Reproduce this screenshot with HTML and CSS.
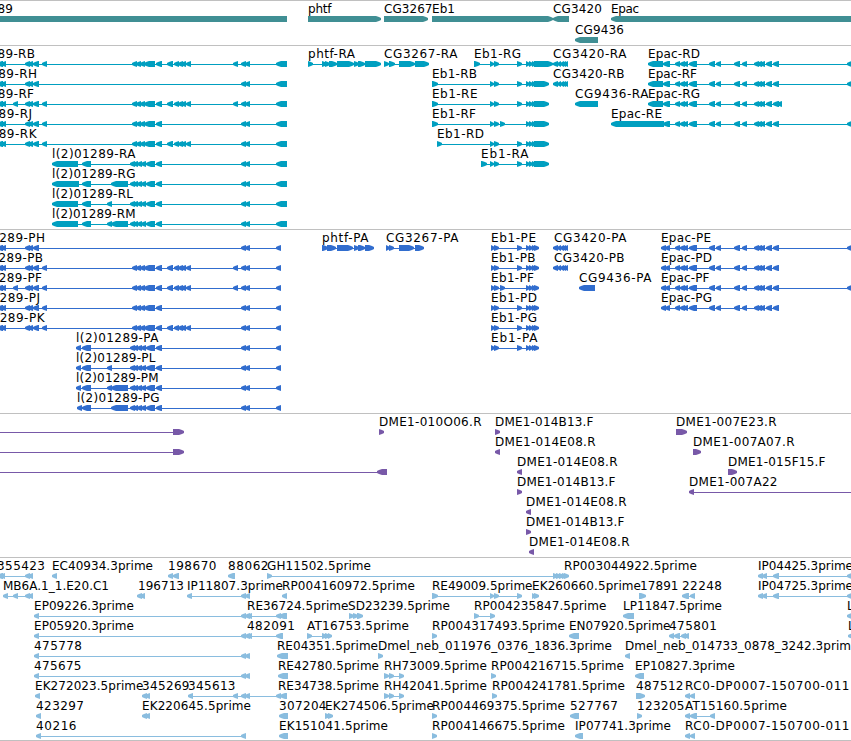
FILE: index.html
```html
<!DOCTYPE html>
<html lang="en">
<head>
  <meta charset="UTF-8" />
  <meta name="viewport" content="width=device-width, initial-scale=1.0"/>
  <title>Genome Browser</title>
  <link rel="stylesheet" href="styles.css">
</head>
<body>
  <main class="browser">
    <section class="track genes" id="genes"></section>
    <section class="track transcripts" id="transcripts"></section>
    <section class="track proteins" id="proteins"></section>
    <section class="track clones" id="clones"></section>
    <section class="track ests" id="ests"></section>
  </main>
  <script src="tracks.js"></script>
</body>
</html>
```

FILE: styles.css
```css
body {
  margin: 0;
  background: #fff;
  font-family: "DejaVu Sans", sans-serif;
  font-size: 12px;
  overflow: hidden;
}

.browser {
  display: flex;
  flex-direction: column;
  width: 851px;
  border-bottom: 1px solid #c0c0c0;
}

.track {
  display: flex;
  flex-direction: column;
  padding: 2px 0 1px;
  border-top: 1px solid #c0c0c0;
}

.row {
  display: block;
  width: 851px;
  height: 20px;
  overflow: hidden;
}

.label {
  fill: #000;
}

.exon,
.intron {
  fill: currentColor;
}

.intron {
  shape-rendering: crispEdges;
}

.genes {
  color: #408f94;
  padding-bottom: 0;
}

.genes .row {
  height: 21px;
}

.transcripts {
  color: #009fc0;
}

.proteins {
  color: #316dce;
}

.clones {
  color: #7859a8;
}

.ests {
  color: #8abddf;
  padding-bottom: 0;
}
```

FILE: tracks.js
```js
// exon groups shared by several isoforms, as start-end pairs
const A = "-3-3 1-6 ";
const B3 = "25-30 28-33 33-39 ";
const B4 = B3 + "42-47 ";
const C = "132-137 136-141 140-145 144-155 156-162 ";
const C2 = "130-135 133-138 137-142 141-146 146-155 156-162 ";
const D = "167-173 174-179 178-183 181-186 186-191 ";
const F = "241-246 245-250 ";
const G = "276-287";
const P = "276-281";
const EB = "490-494 494-499 517-522 526-530 529-533 532-536 534-549";
const EBP = "491-495 494-499 517-522 526-530 529-533 532-536 534-539";
const CG = "553-558 557-561 560-564 562-566 564-568";
const EP = "675-680 680-685 683-688 689-697 709-715 716-721 734-740 742-747 754-759 757-762 760-765 766-772 773-779";
const EPT = " 648-663 663-670 " + EP;
const EPP = "661-666 665-670 " + EP;
const END = " 847-860";

// feature: [label, right edge of label, direction, exons, left edge of label if it differs]
const tracks = {
  genes: [
    [["l(2)01289", 12.5, "<", "-20-287", -48], ["phtf", 331, ">", "308-381"], ["CG3267", 432, ">", "384-428"],
     ["Eb1", 454.5, ">", "432-553"], ["CG3420", 601.5, "<", "553-569"], ["Epac", 638.5, "<", "611-860"]],
    [["CG9436", 623.5, "<", "575-598"]]
  ],
  transcripts: [
    [["l(2)01289-RB", 34.5, "<", A + B4 + C + D + "233-238 " + F + G, -48],
     ["phtf-RA", 354.5, ">", "308-313 322-327 325-330 329-337 337-354 354-359 358-365 365-381"],
     ["CG3267-RA", 457, ">", "384-389 389-395 399-415 415-429"],
     ["Eb1-RG", 520.5, ">", "474-480 490-494 494-499 517-522 526-530 529-533 532-536 534-553"],
     ["CG3420-RA", 626, "<", CG], ["Epac-RD", 699.5, "<", EPT + END]],
    [["l(2)01289-RH", 36.5, "<", A + B3 + F + G, -48], ["Eb1-RB", 476.5, ">", "432-438 " + EB],
     ["CG3420-RB", 624, "<", CG], ["Epac-RF", 696.5, "<", EPT + END]],
    [["l(2)01289-RF", 33.5, "<", A + "13-18 " + B4 + C + D + "233-238 " + F + G, -48], ["Eb1-RE", 477, ">", "432-438 " + EB],
     ["CG9436-RA", 648, "<", "575-598"], ["Epac-RG", 699.5, "<", EPT + " 777-782"]],
    [["l(2)01289-RJ", 31.5, "<", A + B4 + C + F + G, -48],
     ["Eb1-RF", 475.5, ">", "432-438 490-494 494-499 500-505 526-530 529-533 532-536 534-549"],
     ["Epac-RE", 661.5, "<", "611-664 663-670 " + EP + END]],
    [["l(2)01289-RK", 36, "<", A + B4 + C + D + F + G, -48], ["Eb1-RD", 483.5, ">", "437-442 " + EB]],
    [["l(2)01289-RA", 135, "<", "52-78 82-91 " + C2 + F + G], ["Eb1-RA", 528, ">", "481-487 " + EB]],
    [["l(2)01289-RG", 135, "<", "52-79 82-91 111-128 " + C2 + F + G]],
    [["l(2)01289-RL", 132.5, "<", "52-78 82-91 107-112 " + C2 + F + G]],
    [["l(2)01289-RM", 135, "<", "52-78 82-91 107-112 111-128 " + C2 + F + G]]
  ],
  proteins: [
    [["l(2)01289-PH", 44.5, "<", A + B3 + F + P, -39],
     ["phtf-PA", 368, ">", "322-328 327-336 337-353 354-359 358-365 365-374"],
     ["CG3267-PA", 458, ">", "386-390 389-394 399-414 415-424"], ["Eb1-PE", 535.5, ">", EBP],
     ["CG3420-PA", 626, "<", CG, 554], ["Epac-PE", 710.5, "<", EPP + END]],
    [["l(2)01289-PB", 42.5, "<", A + B4 + C + D + "233-238 " + F + P, -39], ["Eb1-PB", 535, ">", EBP],
     ["CG3420-PB", 624, "<", CG, 554], ["Epac-PD", 711.5, "<", EPP]],
    [["l(2)01289-PF", 41.5, "<", A + "13-18 " + B4 + C + D + "233-238 " + F + P, -39],
     ["Eb1-PF", 533.5, ">", "491-495 494-499 500-505 526-530 529-533 532-536 534-539"],
     ["CG9436-PA", 651, "<", "579-595"], ["Epac-PF", 709, "<", EPP + END]],
    [["l(2)01289-PJ", 39.5, "<", A + B4 + C + F + P, -39], ["Eb1-PD", 536.5, ">", EBP], ["Epac-PG", 711.5, "<", EPP]],
    [["l(2)01289-PK", 44, "<", A + B4 + C + D + F + P, -39], ["Eb1-PG", 536.5, ">", EBP]],
    [["l(2)01289-PA", 158, "<", "76-81 82-91 " + C2 + F + P], ["Eb1-PA", 537, ">", EBP]],
    [["l(2)01289-PL", 155, "<", "76-81 82-91 107-112 " + C2 + F + P]],
    [["l(2)01289-PM", 158, "<", "76-81 82-91 107-112 111-128 " + C2 + F + P]],
    [["l(2)01289-PG", 159, "<", "77-82 82-91 111-128 " + C2 + F + P]]
  ],
  clones: [
    [["", 0, ">", "-20--15 173-184"], ["DME1-010O06.R", 481, ">", "379-384"],
     ["DME1-014B13.F", 593, ">", "495-500"], ["DME1-007E23.R", 776, ">", "676-687"]],
    [["", 0, ">", "-20--15 173-184"], ["DME1-014E08.R", 595, "<", "495-500"], ["DME1-007A07.R", 794, ">", "693-701"]],
    [["", 0, "<", "-20--15 377-387"], ["DME1-014E08.R", 617, "<", "517-522"], ["DME1-015F15.F", 825, ">", "728-737"]],
    [["DME1-014B13.F", 615, ">", "517-522"], ["DME1-007A22", 777, "<", "689-694 860-865"]],
    [["DME1-014E08.R", 626, "<", "526-531"]],
    [["DME1-014B13.F", 624, ">", "526-531"]],
    [["DME1-014E08.R", 629, "<", "529-534"]]
  ],
  ests: [
    [["355423", 44.5, "<", "-3-3 0-5 25-30 28-33", -3], ["EC40934.3prime", 152.5, "<", "52-57"],
     ["198670", 216, "<", "168-173 173-179"], ["88062", 268, "<", "228-235"],
     ["GH11502.5prime", 370.5, ">", "267-272 553-558 556-561 559-564 562-567 564-569"],
     ["RP003044922.5prime", 696.5, ">", "", 564],
     ["IP04425.3prime", 852.5, "<", "758-763 762-767 773-779 847-860"]],
    [["MB6A.1_1.E20.C1", 108.5, "<", "3-8 13-18 25-30 28-33"], ["196713", 183.5, "<", "137-142 140-145", 138],
     ["IP11807.3prime", 282.5, "<", "187-192 " + F], ["RP004160972.5prime", 414.5, "<", "282-287"],
     ["RE49009.5prime", 532, ">", "432-438 490-494 494-499 517-522"], ["EK260660.5prime", 640.5, ">", "532-536 534-539"],
     ["17891", 678, ">", "639-646", 640], ["22248", 721.5, "<", "682-689 690-695"],
     ["IP04725.3prime", 852.5, "<", "758-763 762-767 773-779 847-860"]],
    [["EP09226.3prime", 133.5, "<", "34-39 " + F], ["RE36724.5prime", 348, "<", "247-252 276-281 279-287"],
     ["SD23239.5prime", 449.5, ">", "349-354 353-358 357-363", 348], ["RP004235847.5prime", 606, ">", "474-479 490-495"],
     ["LP11847.5prime", 721.5, "<", "623-634"], ["LD", 864, "<", "847-860"]],
    [["EP05920.3prime", 133.5, "<", "34-39 " + F], ["482091", 294.5, "<", "247-252 276-283"],
     ["AT16753.5prime", 408.5, ">", "307-312 322-327 325-330 328-332"], ["RP004317493.5prime", 564.5, ">", "432-437"],
     ["EN07920.5prime", 670, "<", "569-579"], ["475801", 716.5, "<", "669-674 674-680 681-686 684-689"],
     ["LD", 865, "<", "848-860"]],
    [["475778", 81.5, "<", "34-39 " + F], ["RE04351.5prime", 377.5, "<", "277-288"],
     ["Dmel_neb_011976_0376_1836.3prime", 611.5, ">", "378-383"],
     ["Dmel_neb_014733_0878_3242.3prime", 858, "<", "625-630"]],
    [["475675", 81, "<", "34-39 " + F], ["RE42780.5prime", 378.5, "<", "278-288"],
     ["RH73009.5prime", 486.5, ">", "384-389 389-394 399-404"], ["RP004216715.5prime", 623.5, ">", "491-496"],
     ["EP10827.3prime", 734.5, "<", "635-644"]],
    [["EK272023.5prime", 143, "<", "35-40"], ["345269", 189, "<", "142-147 145-150"],
     ["345613", 235, "<", "188-193 233-238 " + F + "276-281 280-287"], ["RE34738.5prime", 378.5, "<", "", 278],
     ["RH42041.5prime", 486.5, ">", "384-389 389-394 399-404"], ["RP004241781.5prime", 624.5, ">", "492-497"],
     ["487512", 683, ">", "636-645"], ["RC0-DP0007-150700-011", 849, "<", "685-690 690-695"]],
    [["423297", 83.5, "<", "36-41"], ["EK220645.5prime", 250.5, "<", "142-147 145-150"],
     ["307204", 326, "<", "279-288"], ["EK274506.5prime", 433.5, ">", "325-330 328-333"],
     ["RP004469375.5prime", 564.5, ">", "432-437"], ["527767", 617.5, "<", "570-579"],
     ["123205", 684, ">", "637-642"], ["AT15160.5prime", 786.5, "<", "685-690 690-697 710-715"]],
    [["40216", 76, "<", "36-41 241-246"], ["EK151041.5prime", 387.5, "<", "279-288"],
     ["RP004146675.5prime", 564.5, ">", "432-437"], ["IP07741.3prime", 670.5, "<", "575-583"],
     ["RC0-DP0007-150700-011", 849, "<", "685-690 690-695"]]
  ]
};

const NS = "http://www.w3.org/2000/svg";
const BAR_TOP = 13;

function add(parent, name, attrs) {
  const el = document.createElementNS(NS, name);
  for (const key in attrs) el.setAttribute(key, attrs[key]);
  parent.appendChild(el);
  return el;
}

// block with a rounded head on the side it is read towards
function exonPoints(x1, x2, dir) {
  const t = BAR_TOP;
  const head = Math.min(x2 - x1, 5);
  const tip = dir === "<" ? x1 : x2;
  const tail = dir === "<" ? x2 : x1;
  const step = dir === "<" ? 1 : -1;
  const mid = tip + step * 2;
  const neck = tip + step * head;
  return `${tip},${t + 2} ${mid},${t + 1} ${neck},${t} ${tail},${t} ` +
    `${tail},${t + 6} ${neck},${t + 6} ${mid},${t + 5} ${tip},${t + 4}`;
}

function drawFeature(row, [label, right, dir, exons, left]) {
  const parts = [...exons.matchAll(/(-?\d+)-(-?\d+)/g)].map(m => [Number(m[1]), Number(m[2])]);

  if (parts.length) {
    const start = parts[0][0];
    const end = parts[parts.length - 1][1];
    add(row, "rect", { class: "intron", x: start, y: BAR_TOP + 3, width: end - start, height: 1 });
    parts.forEach(([a, b]) => add(row, "polygon", { class: "exon", points: exonPoints(a, b, dir) }));
  }

  if (label) {
    const x = left !== undefined ? left : parts[0][0];
    const text = add(row, "text", { class: "label", x: x, y: 10, textLength: right - x + 0.5 });
    text.textContent = label;
  }
}

for (const id in tracks) {
  const track = document.getElementById(id);
  tracks[id].forEach(features => {
    const row = add(track, "svg", { class: "row" });
    features.forEach(f => drawFeature(row, f));
  });
}
```
